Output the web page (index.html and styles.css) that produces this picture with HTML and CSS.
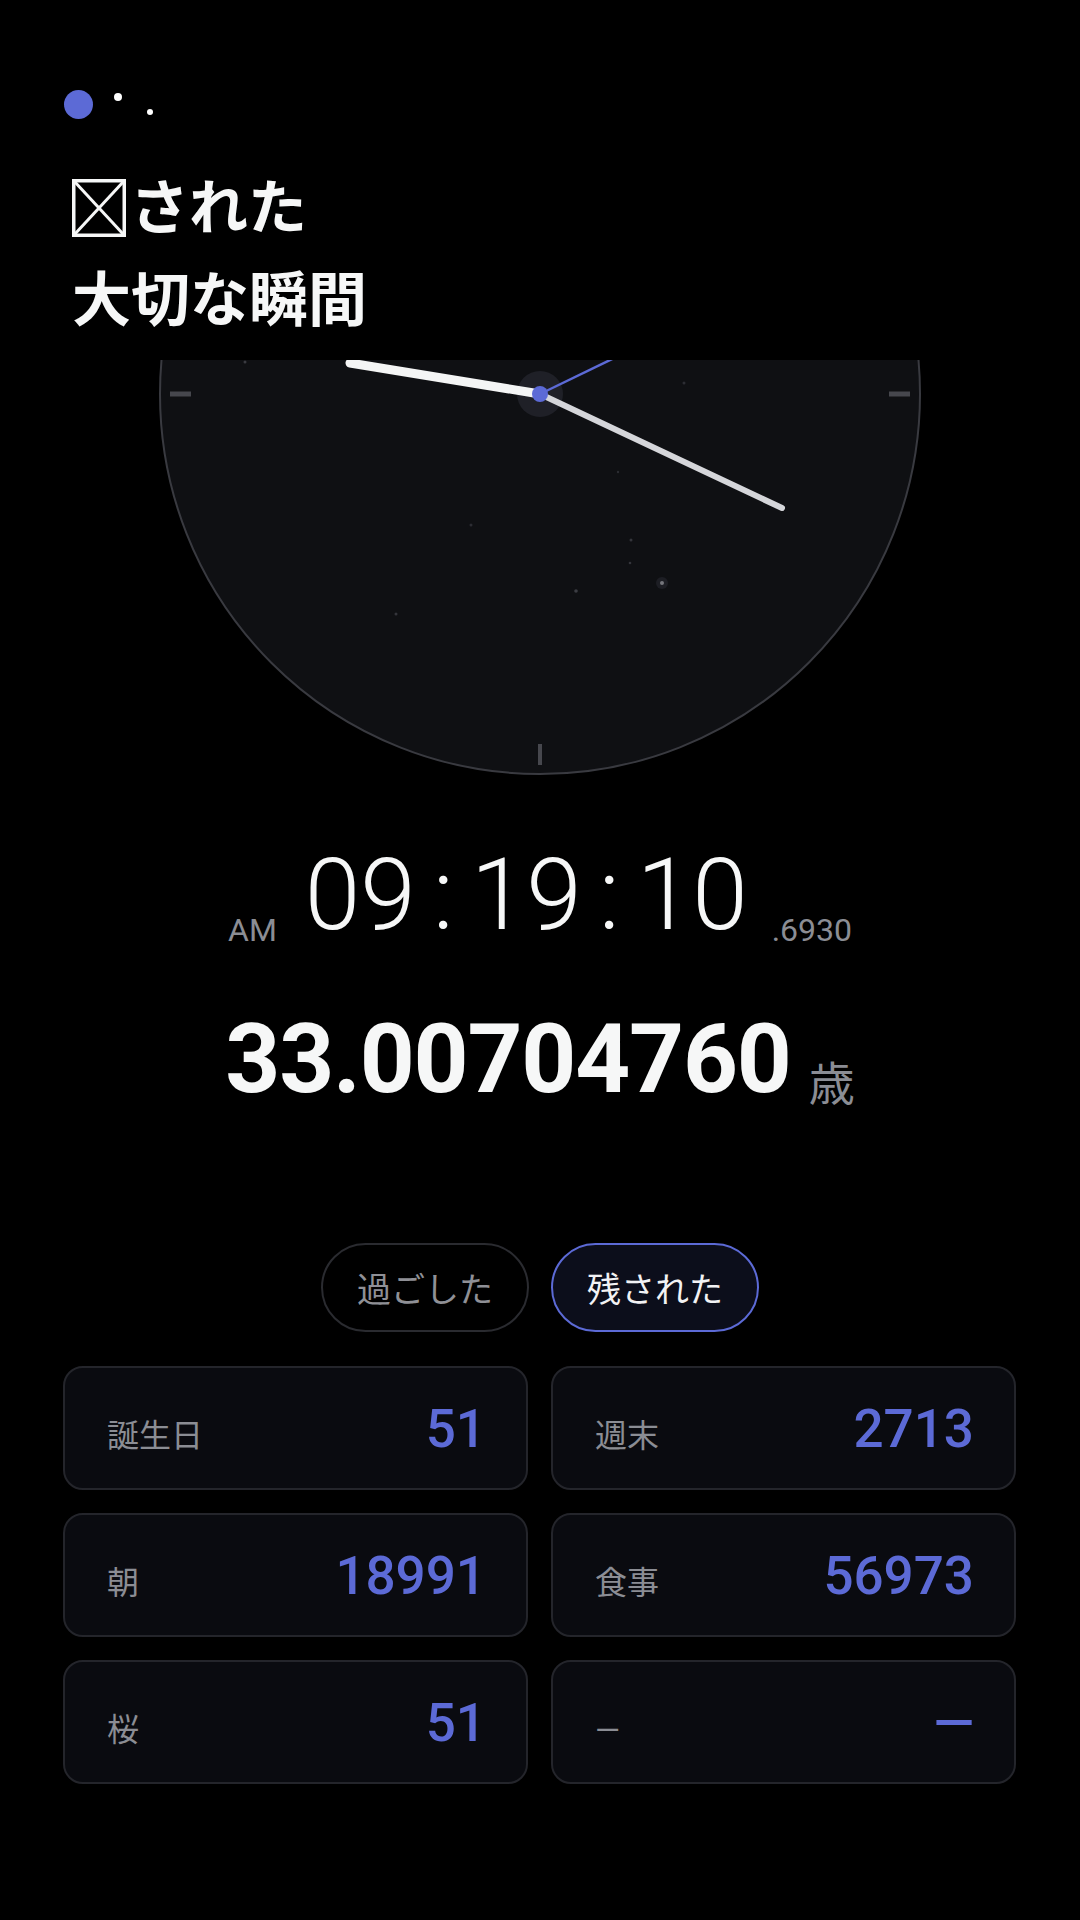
FILE: index.html
```html
<!DOCTYPE html>
<html lang="ja">
<head>
    <meta charset="UTF-8">
    <title>大切な瞬間</title>
    <link rel="stylesheet" href="styles.css">
</head>
<body>
    <header class="header">
        <svg class="logo" width="96" height="32" viewBox="0 0 96 32">
            <circle cx="16.5" cy="16.5" r="14.5" fill="#5c6ad6"/>
            <circle cx="56" cy="9" r="4" fill="#ffffff"/>
            <circle cx="88" cy="24" r="3" fill="#ffffff"/>
        </svg>
        <h1 class="title">
            <svg class="tofu" width="54" height="58" viewBox="0 0 54 58">
                <rect x="1.75" y="1.75" width="50.5" height="54.5" fill="none" stroke="#f6f7f7" stroke-width="3.5"/>
                <line x1="2" y1="2" x2="52" y2="56" stroke="#f6f7f7" stroke-width="3"/>
                <line x1="52" y1="2" x2="2" y2="56" stroke="#f6f7f7" stroke-width="3"/>
            </svg>された<br>大切な瞬間
        </h1>
    </header>

    <svg class="dial" width="1080" height="416" viewBox="0 0 1080 416">
        <circle cx="540" cy="34" r="380" fill="#0f1013" stroke="#393a40" stroke-width="2"/>
        <!-- ticks -->
        <line x1="170" y1="34" x2="191" y2="34" stroke="#46474d" stroke-width="5"/>
        <line x1="889" y1="34" x2="910" y2="34" stroke="#46474d" stroke-width="5"/>
        <line x1="540" y1="384" x2="540" y2="405" stroke="#46474d" stroke-width="4"/>
        <!-- stars -->
        <circle cx="245" cy="2" r="1.5" fill="#3a3b41"/>
        <circle cx="684" cy="23" r="1.5" fill="#2c2d33"/>
        <circle cx="618" cy="112" r="1.2" fill="#2c2d33"/>
        <circle cx="471" cy="165" r="1.5" fill="#2c2d33"/>
        <circle cx="631" cy="180" r="1.5" fill="#34353b"/>
        <circle cx="630" cy="203" r="1.3" fill="#34353b"/>
        <circle cx="576" cy="231" r="1.8" fill="#3c3d43"/>
        <circle cx="662" cy="223" r="6" fill="#1d1e24"/>
        <circle cx="662" cy="223" r="2" fill="#75767c"/>
        <circle cx="396" cy="254" r="1.5" fill="#34353b"/>
        <!-- hub + hands -->
        <circle cx="540" cy="34" r="23" fill="#1f2027"/>
        <line x1="540" y1="34" x2="350" y2="3" stroke="#f4f5f5" stroke-width="9" stroke-linecap="round"/>
        <line x1="540" y1="34" x2="782" y2="148" stroke="#d5d6da" stroke-width="6" stroke-linecap="round"/>
        <line x1="540" y1="34" x2="864" y2="-123" stroke="#5c6ad6" stroke-width="2.5"/>
        <circle cx="540" cy="34" r="8" fill="#5c6ad6"/>
    </svg>

    <div class="time-row">
        <span class="ampm">AM</span>
        <span class="clock-digits">09<span class="colon">:</span>19<span class="colon">:</span>10</span>
        <span class="ms">.6930</span>
    </div>

    <div class="age">33.00704760<span class="unit">歳</span></div>

    <div class="toggle">
        <button class="pill">過ごした</button>
        <button class="pill active">残された</button>
    </div>

    <div class="stats">
        <div class="card"><span class="label">誕生日</span><span class="value">51</span></div>
        <div class="card"><span class="label">週末</span><span class="value">2713</span></div>
        <div class="card"><span class="label">朝</span><span class="value">18991</span></div>
        <div class="card"><span class="label">食事</span><span class="value">56973</span></div>
        <div class="card"><span class="label">桜</span><span class="value">51</span></div>
        <div class="card"><span class="label">—</span><span class="value">—</span></div>
    </div>
</body>
</html>
```

FILE: styles.css
```css
body { margin: 0; width: 1080px; background: #000; color: #f6f7f7; font-family: Roboto, "Noto Sans CJK JP", sans-serif; }

.header { height: 360px; box-sizing: border-box; padding: 88px 0 0 62px; background: #000; }
.logo { display: block; }
.title { margin: 38px 0 0 10px; font-family: "Noto Sans CJK JP", sans-serif; font-size: 59px; line-height: 92px; font-weight: 700; color: #f6f7f7; }
.tofu { vertical-align: -0.14em; margin-right: 4px; }

.dial { display: block; }

.time-row { display: flex; justify-content: center; align-items: flex-end; margin-top: 69px; }
.ampm, .ms { font-size: 32px; line-height: 1; color: #8b8d94; margin-bottom: -1px; }
.ampm { margin-right: 28px; }
.ms { margin-left: 24px; }
.clock-digits { font-size: 100px; font-weight: 300; line-height: 1; color: #f6f7f7; }
.colon { margin: 0 17px; }

.age { margin-top: 66px; text-align: center; font-size: 96px; font-weight: 700; line-height: 1; letter-spacing: -1.2px; color: #f6f7f7; }
.unit { font-family: "Noto Sans CJK JP", sans-serif; font-size: 46px; font-weight: 400; line-height: 1; letter-spacing: 0; color: #8b8d94; margin-left: 18px; vertical-align: -8px; }

.toggle { display: flex; justify-content: center; gap: 22px; margin-top: 136px; }
.pill { width: 208px; height: 89px; box-sizing: border-box; border: 2px solid #2a2b30; border-radius: 45px; background: #000; color: #8f9096; font-family: "Noto Sans CJK JP", sans-serif; font-size: 34px; padding: 0; }
.pill.active { border: 2.5px solid #5c6ad6; background: #0c0e1b; color: #f2f2f4; }

.stats { display: grid; grid-template-columns: 1fr 1fr; gap: 23px; padding: 0 64px 0 63px; margin-top: 34px; }
.card { height: 124px; box-sizing: border-box; display: flex; justify-content: space-between; align-items: baseline; padding: 35px 40px 0 42px; border: 2px solid #24252b; border-radius: 20px; background: #0a0b10; }
.label { font-size: 32px; line-height: 1; color: #8b8d94; }
.value { font-size: 53px; font-weight: 500; line-height: 1; color: #5c6ad6; }
```
